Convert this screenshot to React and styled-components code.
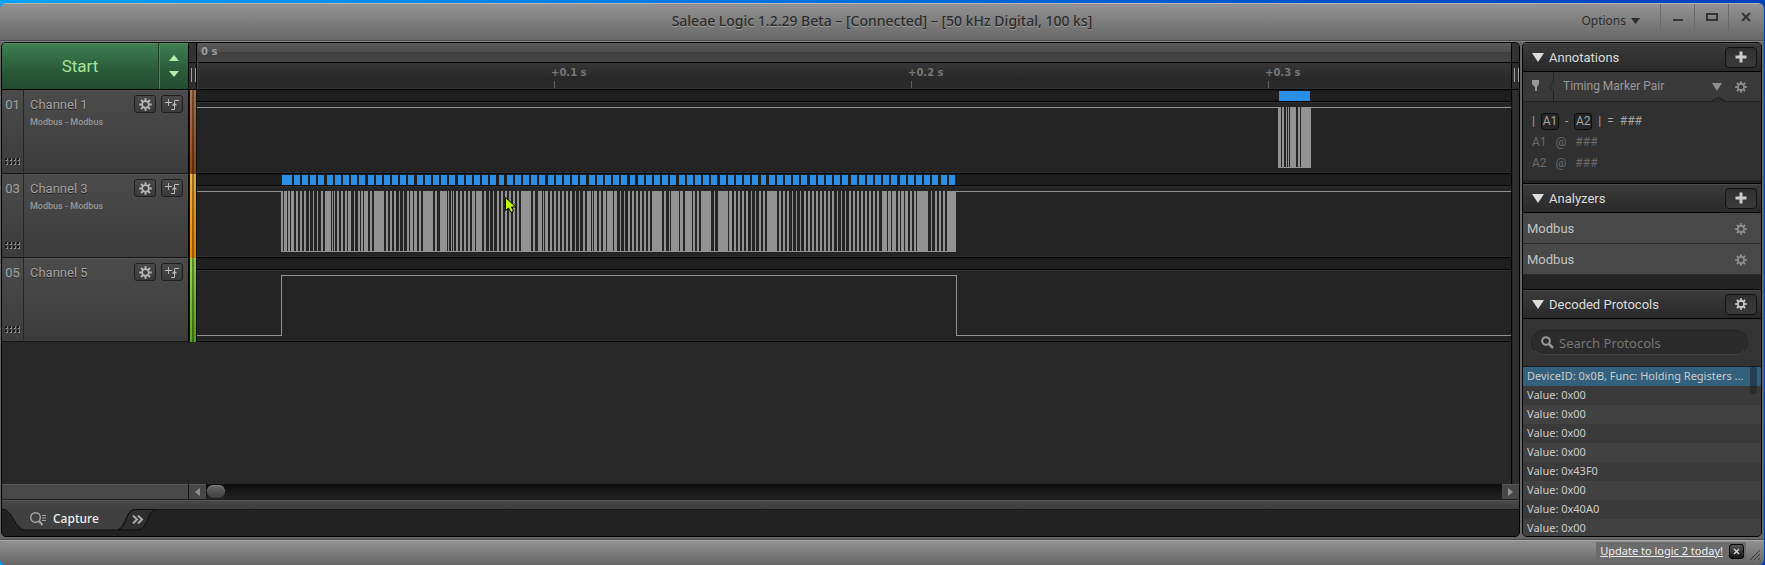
import React from "react";
import styled, { createGlobalStyle } from "styled-components";

const ui = `Roboto, "Noto Sans", sans-serif`;
const humanist = `"Noto Sans", "Open Sans", sans-serif`;
const wide = `"DejaVu Sans", "Noto Sans", sans-serif`;

const GlobalStyle = createGlobalStyle`
  * { box-sizing: border-box; }
  body { margin: 0; background: linear-gradient(90deg, #00a2ff, #0058d0 70%, #0040c0); }
  button { font: inherit; color: inherit; padding: 0; margin: 0; border: 0; background: none; cursor: pointer; }
  ul { list-style: none; margin: 0; padding: 0; }
  h1, h2, p { margin: 0; font-weight: 400; }
`;

const Window = styled.div`
  height: 100vh;
  min-width: 900px;
  padding: 3px 1px 0 0;
  display: flex;
  flex-direction: column;
  font: 13px/16px ${ui};
  color: #a0a0a0;
`;

const Frame = styled.div`
  flex: 1;
  min-height: 0;
  display: flex;
  flex-direction: column;
  border-radius: 6px;
  overflow: hidden;
  background: #666;
`;

/* ---------- title bar ---------- */

const TitleBar = styled.header`
  flex: none;
  height: 39px;
  display: grid;
  grid-template-columns: 1fr auto 1fr;
  color: #2c2c2c;
  border-top: 1px solid #b4b4b4;
  border-bottom: 1px solid #858585;
  box-shadow: inset 0 -1px 0 #4c4c4c;
  background: linear-gradient(#939393, #666);
`;

const Title = styled.h1`
  font: 500 14px/34px ${humanist};
  text-shadow: 0 1px 0 #9a9a9a;
`;

const TitleActions = styled.div`
  display: flex;
  justify-content: flex-end;
  align-items: flex-start;
  padding-right: 2px;
`;

const OptionsButton = styled.button`
  display: flex;
  align-items: center;
  gap: 5px;
  margin-right: 20px;
  height: 34px;
  font: 12px/34px ${humanist};
`;

const WindowButton = styled.button`
  width: 34px;
  height: 26px;
  display: grid;
  place-items: center;
  border-left: 1px solid #6a6a6a;
`;

/* ---------- body ---------- */

const Body = styled.main`
  flex: 1;
  min-height: 0;
  display: grid;
  grid-template-columns: minmax(0, 1fr) 240px;
  gap: 2px;
  padding: 0 2px 2px 1px;
`;

const Capture = styled.section`
  min-height: 0;
  display: flex;
  flex-direction: column;
  border: 1px solid #000;
  border-radius: 5px;
  overflow: hidden;
  background: #282828;
`;

const Upper = styled.div`
  flex: 1;
  min-height: 0;
  display: flex;
`;

const Tracks = styled.div`
  flex: 1;
  min-width: 0;
`;

const RightGutter = styled.div`
  width: 8px;
  border-left: 1px solid #000;
  background: linear-gradient(90deg, #262626, #303030 30%, #2a2a2a);
`;

const Grip = styled.div`
  height: 47px;
  border-bottom: 1px solid #000;
  padding: 25px 2px 0;
  background: linear-gradient(#333 19px, #000 19px, #000 20px, #2e2e2e 20px);
  &::before {
    content: "";
    display: block;
    width: 3px;
    height: 14px;
    border: solid #a2a2a2;
    border-width: 0 1px;
  }
`;

const TopRow = styled.div`
  display: flex;
  height: 47px;
`;

const StartGroup = styled.div`
  width: 187px;
  display: flex;
  border-right: 1px solid #000;
  border-bottom: 1px solid #000;
  background: linear-gradient(#3f8050, #37734a 20%, #2a5a38 60%, #244c31);
  box-shadow: inset 0 1px 0 #56956a;
`;

const StartButton = styled.button`
  flex: 1;
  font: 17px/46px ${ui};
  color: #a8e29a;
`;

const StartOptions = styled.button`
  width: 30px;
  display: grid;
  place-items: center;
  border-left: 1px solid #1d3d27;
  box-shadow: inset 1px 0 0 #4b8a5e;
`;

const RulerArea = styled.div`
  flex: 1;
  min-width: 0;
  border-bottom: 1px solid #000;
  border-left: 1px solid #444;
`;

const LeftGrip = styled.div`
  width: 8px;
  border-right: 1px solid #000;
`;

const RulerOrigin = styled.div`
  height: 20px;
  padding-left: 3px;
  border-bottom: 1px solid #000;
  background: linear-gradient(#5a5a5a, #4c4c4c 50%, #404040 50%, #444);
  font: 700 10px/18px ${wide};
  color: #9c9c9c;
`;

const RulerScale = styled.div`
  height: 26px;
  display: flex;
  overflow: hidden;
  padding-left: 353px;
  background: linear-gradient(#363636, #292929 60%, #2a2a2a);
  border-bottom: 1px solid #333;
`;

const RulerMark = styled.span`
  flex: none;
  width: 357px;
  font: 700 10px/16px ${wide};
  color: #777;
  padding-top: 2px;
  &::after {
    content: "";
    display: block;
    width: 1px;
    height: 8px;
    margin-left: 3px;
    background: #606060;
  }
`;

/* ---------- channels ---------- */

const Channel = styled.div`
  display: flex;
  height: 84px;
`;

const ChannelIndex = styled.div`
  width: 22px;
  display: flex;
  flex-direction: column;
  justify-content: space-between;
  align-items: center;
  padding: 7px 0 7px;
  border-right: 1px solid #262626;
  border-bottom: 1px solid #161616;
  background: linear-gradient(#4b4b4b, #3c3c3c);
`;

const ChannelHead = styled.div`
  width: 165px;
  display: grid;
  grid-template-columns: 1fr auto;
  align-content: start;
  padding: 5px 5px 0 6px;
  border-right: 1px solid #000;
  border-bottom: 1px solid #161616;
  box-shadow: inset 0 1px 0 #555;
  background: linear-gradient(#4b4b4b, #3c3c3c);
`;

const ChannelName = styled.h2`
  font: 13px/20px ${ui};
  color: #a2a2a2;
  text-shadow: 0 1px 0 #222;
`;

const ChannelButtons = styled.div`
  display: flex;
  gap: 5px;
`;

const SmallButton = styled.button`
  width: 22px;
  height: 18px;
  display: grid;
  place-items: center;
  color: #b8b8b8;
  border: 1px solid #1e1e1e;
  border-radius: 3px;
  background: linear-gradient(#484848, #3a3a3a);
`;

const AnalyzerNote = styled.p`
  grid-column: 1 / -1;
  font: 500 9px/14px ${ui};
  color: #989898;
`;

const ColorBand = styled.div`
  width: 8px;
  border: solid #111;
  border-width: 0 1px;
  background:
    linear-gradient(90deg, transparent 2px, rgba(0, 0, 0, 0.38) 2px, rgba(0, 0, 0, 0.38) 4px, rgba(0, 0, 0, 0.08) 4px),
    linear-gradient(${(p) => p.$from}, ${(p) => p.$to});
`;

const Lane = styled.div`
  flex: 1;
  min-width: 0;
  overflow: hidden;
  border-bottom: 1px solid #000;
  box-shadow: inset 0 -1px 0 #303030;
  background: linear-gradient(#1a1a1a 1px, #1f1f1f 2px, #1f1f1f 11px, #000 11px, #000 12px, #303030 12px, #303030 13px, #242424 13px);
  svg { display: block; }
`;

/* ---------- bottom of capture area ---------- */

const ScrollRow = styled.div`
  flex: none;
  height: 16px;
  display: flex;
  border-bottom: 1px solid #1c1c1c;
  background: #484848;
  box-shadow: inset 0 1px 0 #585858;
`;

const ScrollSpacer = styled.div`
  width: 187px;
  border-right: 1px solid #111;
`;

const ScrollArrow = styled.button`
  width: 17px;
  display: grid;
  place-items: center;
`;

const ScrollTrack = styled.div`
  flex: 1;
  padding: 1px;
  background: linear-gradient(#0c0c0c, #222);
`;

const ScrollThumb = styled.div`
  width: 18px;
  height: 13px;
  border-radius: 7px;
  background: linear-gradient(#686868, #3e3e3e);
  box-shadow: inset 0 1px 0 #808080;
`;

const TabBar = styled.nav`
  flex: none;
  height: 36px;
  display: flex;
  align-items: flex-start;
  padding-top: 9px;
  background: linear-gradient(#5a5a5a 1px, #464646 1px, #404040 9px, #141414 9px, #141414 10px, #222 10px);
`;

const Tab = styled.button`
  position: relative;
  width: ${(p) => p.$width}px;
  height: 22px;
  margin-right: -18px;
  font: 500 12px/18px ${humanist};
  color: #eee;
`;

const TabShape = styled.svg`
  position: absolute;
  inset: 0;
`;

const TabLabel = styled.span`
  position: relative;
  display: flex;
  align-items: center;
  gap: 6px;
  height: 20px;
  padding: 0 0 2px ${(p) => p.$pad}px;
`;

/* ---------- side panel ---------- */

const Side = styled.aside`
  min-height: 0;
  display: flex;
  flex-direction: column;
  border: 1px solid #000;
  border-radius: 5px;
  overflow: hidden;
  background: #232323;
`;

const PanelHeader = styled.div`
  flex: none;
  display: flex;
  align-items: center;
  height: ${(p) => (p.$first ? 29 : 30)}px;
  padding: 0 4px 0 9px;
  gap: 5px;
  border: solid #000;
  border-width: ${(p) => (p.$first ? "0 0 1px" : "1px 0")};
  box-shadow: inset 0 1px 0 #4a4a4a;
  background: linear-gradient(#3b3b3b, #292929);
`;

const PanelTitle = styled.h2`
  flex: 1;
  padding-top: 2px;
  font: 13px/26px ${ui};
  color: #dcdcdc;
`;

const PanelButton = styled(SmallButton)`
  width: 32px;
  height: 21px;
  color: #ccc;
  border-color: #111;
  border-radius: 4px;
  background: linear-gradient(#2f2f2f, #3a3a3a);
`;

const MarkerRow = styled.div`
  position: relative;
  flex: none;
  height: 30px;
  display: flex;
  align-items: center;
  gap: 13px;
  padding: 0 14px 0 8px;
  border-bottom: 1px solid #222;
  background: #393939;
`;

const MarkerName = styled.span`
  flex: 1;
  display: flex;
  gap: 9px;
  font: 12px/29px ${ui};
  color: #999;
`;

const Notch = styled.svg`
  position: absolute;
  right: 35px;
  bottom: -1px;
`;

const IconButton = styled.button`
  display: grid;
  place-items: center;
  color: #8f8f8f;
`;

const MarkerBody = styled.div`
  flex: none;
  height: 78px;
  padding: 9px 8px 0 9px;
  background: #303030;
`;

const MarkerLine = styled.div`
  display: flex;
  align-items: center;
  height: 21px;
  gap: ${(p) => (p.$first ? 6 : 9)}px;
  font: 12px/21px ${ui};
  color: ${(p) => (p.$first ? "#a4a4a4" : "#6a6a6a")};
`;

const MarkerChip = styled.span`
  width: 18px;
  height: 17px;
  font: 12px/15px ${ui};
  text-align: center;
  border-radius: 3px;
  border: 1px solid #0c0c0c;
  background: #262626;
`;

const Gap = styled.div`
  flex: none;
  height: ${(p) => p.$size}px;
`;

const AnalyzerRow = styled.li`
  height: 31px;
  display: flex;
  align-items: center;
  justify-content: space-between;
  padding: 2px 14px 0 4px;
  font: 13px/28px ${ui};
  color: #c4c4c4;
  background: #484848;
  border-bottom: 1px solid #2a2a2a;
`;

const SearchArea = styled.div`
  flex: none;
  height: 47px;
  padding: 11px 13px 0 8px;
  background: #333;
`;

const SearchBox = styled.label`
  display: flex;
  align-items: center;
  gap: 5px;
  height: 25px;
  padding: 0 9px;
  color: #999;
  border-radius: 13px;
  border: 1px solid #242424;
  border-bottom-color: #444;
  background: #2b2b2b;
`;

const SearchInput = styled.input`
  flex: 1;
  min-width: 0;
  padding: 0;
  border: 0;
  outline: 0;
  background: none;
  font: 13px/20px ${humanist};
  color: #ccc;
  &::placeholder { color: #777; opacity: 1; }
`;

const Results = styled.div`
  position: relative;
  flex: 1;
  min-height: 0;
  overflow: hidden;
  border-top: 1px solid #1a1a1a;
`;

const Result = styled.li`
  height: 19px;
  padding-left: 4px;
  font: 11px/18px ${humanist};
  white-space: nowrap;
  color: #ccc;
  background: ${(p) => (p.$selected ? "#33607c" : "#3a3a3a")};
  &:nth-child(odd) { background: ${(p) => (p.$selected ? "#33607c" : "#414141")}; }
`;

const ResultsThumb = styled.div`
  position: absolute;
  top: 0;
  right: 4px;
  width: 7px;
  height: 27px;
  border-radius: 3px;
  background: rgba(20, 30, 36, 0.5);
`;

/* ---------- status bar ---------- */

const StatusBar = styled.footer`
  flex: none;
  height: 26px;
  display: flex;
  justify-content: flex-end;
  align-items: flex-start;
  padding: 2px 4px 0 0;
  border-top: 1px solid #4c4c4c;
  box-shadow: inset 0 1px 0 #aaa;
  background: linear-gradient(#939393, #666);
`;

const Notice = styled.div`
  display: flex;
  align-items: center;
  gap: 6px;
  height: 18px;
  margin-right: 3px;
  padding: 0 2px 0 4px;
  background: #6b6b6b;
`;

const NoticeLink = styled.a`
  font: 11px/18px ${humanist};
  color: #eee;
`;

const DismissButton = styled.button`
  width: 15px;
  height: 15px;
  display: grid;
  place-items: center;
  color: #ddd;
  border: 1px solid #000;
  border-radius: 3px;
  background: linear-gradient(#555, #151515);
`;

const Pointer = styled.svg`
  position: absolute;
  left: 504px;
  top: 196px;
  pointer-events: none;
`;

/* ---------- icons ---------- */

const Gear = ({ size = 12 }) => (
  <svg width={size} height={size} viewBox="-6 -6 12 12" fill="none" stroke="currentColor" aria-hidden="true">
    <circle r="3.1" strokeWidth="1.6" />
    {[0, 45, 90, 135, 180, 225, 270, 315].map((a) => (
      <path key={a} d="M0-3.4V-5.8" strokeWidth="1.8" transform={`rotate(${a})`} />
    ))}
  </svg>
);

const Triangle = ({ w, h, fill = "currentColor" }) => (
  <svg width={w} height={h} aria-hidden="true">
    <path d={`M0 0H${w}L${w / 2} ${h}z`} fill={fill} />
  </svg>
);

const TriggerIcon = () => (
  <svg width="15" height="13" fill="none" stroke="currentColor" aria-hidden="true">
    <path d="M0 4.5H7M3.5 1V8M6 11.5H9.5V2.5H14" />
    <path d="M6.8 7.5L9.5 4.5L12.2 7.5z" fill="currentColor" stroke="none" />
  </svg>
);

const Plus = () => (
  <svg width="12" height="12" aria-hidden="true">
    <path d="M6 .5V11.5M.5 6H11.5" stroke="currentColor" strokeWidth="3" />
  </svg>
);

const DragDots = () => (
  <svg width="15" height="8" aria-hidden="true">
    {[0, 4, 8, 12].flatMap((x) =>
      [0, 4].map((y) => (
        <g key={`${x}-${y}`}>
          <rect x={x} y={y} width="2" height="2" fill="#161616" />
          <rect x={x + 1} y={y + 2} width="2" height="1" fill="#909090" />
          <rect x={x + 2} y={y} width="1" height="2" fill="#808080" />
        </g>
      ))
    )}
  </svg>
);

/* ---------- captured data, in pixels from the start of the time line ---------- */

const BURST_START = 84;
const BURST_END = 759;

// "from-to" spans; the A lists count from x = 73 and the B lists from x = 423
const GAPS_A =
  "13-14 17-18 20-21 24-26 28-30 32-34 36-39 40-43 44-47 48-51 53-55 61-62 63-64 65-67 69-71 73-75 77-78 81-84 85-88 90-91 93-94 98-100 102-104 114-116 118-120 122-124 126-129 130-133 134-137 139-140 143-144 147-149 151-153 163-165 167-170 177-178 179-181 182-183 184-186 188-190 192-194 196-198 200-202 205-206 212-214 216-219 220-223 224-227 229-231 233-235 237-239 241-243 245-247 249-251 261-263 265-268 272-273 274-275 278-280 282-284 286-288 290-292 294-296 298-300 302-305 306-309 310-313 315-317 321-322 323-324 327-329 331-333 336-337 343-344 347-350";
const GAPS_B =
  "1-4 5-8 10-12 14-16 18-20 22-24 26-28 30-32 42-44 46-49 50-51 59-60 63-65 72-73 75-77 79-81 91-94 95-98 108-109 112-114 116-118 120-122 124-126 128-131 132-135 136-139 141-143 145-147 157-159 161-163 165-167 169-172 173-176 177-180 181-184 186-188 190-192 194-196 198-200 202-204 206-208 210-212 214-217 218-221 222-225 226-229 231-233 235-237 239-241 243-245 247-249 251-253 255-257 259-262 267-268 271-272 276-278 280-281 284-285 288-290 292-294 296-297 308-311 312-315 317-319 321-323 325-327";
const FRAMES_A =
  "12-22 24-30 32-38 40-46 48-54 57-63 65-71 73-79 81-87 89-95 98-104 106-112 114-120 122-128 130-136 138-144 147-153 155-161 163-169 171-177 179-185 188-194 196-202 204-210 212-218 220-226 229-234 237-243 245-251 253-259 261-267 269-275 278-284 286-292 294-300 302-308 310-316 319-325 327-333 335-341 343-349";
const FRAMES_B =
  "1-7 10-15 18-24 26-32 34-40 42-48 50-56 59-65 67-73 75-81 83-89 91-97 100-106 108-114 116-122 124-130 132-138 141-146 149-155 157-163 165-171 173-179 181-187 190-196 198-204 206-212 214-220 222-228 231-237 239-245 247-253 255-261 263-269 271-277 280-286 288-294 296-302 304-310 312-318 321-327 329-335";

const spans = (text, base) =>
  text.split(" ").map((s) => {
    const [a, b] = s.split("-").map(Number);
    return [base + a, b - a];
  });

const HIGH = 17;
const LOW = 77;

const Burst = ({ start, end, gaps, frames }) => (
  <svg width="100%" height="83" shapeRendering="crispEdges">
    <rect y={HIGH} width="100%" height="1" fill="#929292" />
    <rect x={start} y={HIGH} width={end - start} height={LOW - HIGH + 1} fill="#929292" />
    {gaps.map(([x, w]) => (
      <rect key={x} x={x} y={HIGH} width={w} height={LOW - HIGH} fill="#242424" />
    ))}
    {frames.map(([x, w]) => (
      <rect key={x} x={x} y="1" width={w} height="10" fill="#2a8fe4" />
    ))}
  </svg>
);

const Pulse = () => (
  <svg width="100%" height="83" fill="#929292" shapeRendering="crispEdges">
    <rect y={LOW} width={BURST_START + 1} height="1" />
    <rect x={BURST_START} y={HIGH} width="1" height={LOW - HIGH} />
    <rect x={BURST_START} y={HIGH} width={BURST_END - BURST_START} height="1" />
    <rect x={BURST_END} y={HIGH} width="1" height={LOW - HIGH} />
    <rect x={BURST_END} y={LOW} width="100%" height="1" />
  </svg>
);

const channels = [
  {
    id: "01", name: "Channel 1", note: "Modbus - Modbus", from: "#b07850", to: "#8f4816",
    wave: <Burst start={1081} end={1114} gaps={[[1084, 1], [1087, 2], [1090, 1], [1092, 1], [1099, 2], [1103, 1]]} frames={[[1082, 31]]} />,
  },
  {
    id: "03", name: "Channel 3", note: "Modbus - Modbus", from: "#efb445", to: "#ef8a00",
    wave: (
      <Burst
        start={BURST_START}
        end={BURST_END}
        gaps={[...spans(GAPS_A, 73), ...spans(GAPS_B, 423)]}
        frames={[...spans(FRAMES_A, 73), ...spans(FRAMES_B, 423)]}
      />
    ),
  },
  { id: "05", name: "Channel 5", from: "#98d850", to: "#5aa822", wave: <Pulse /> },
];

const results = ["0x00", "0x00", "0x00", "0x00", "0x43F0", "0x00", "0x40A0", "0x00"];

export default function App() {
  return (
    <Window>
      <GlobalStyle />
      <Frame>
        <TitleBar>
          <span />
          <Title>Saleae Logic 1.2.29 Beta – [Connected] – [50 kHz Digital, 100 ks]</Title>
          <TitleActions>
            <OptionsButton>Options <Triangle w={9} h={6} /></OptionsButton>
            <WindowButton aria-label="Minimize">
              <svg width="12" height="12"><rect x="1" y="8" width="10" height="2" fill="#333" /></svg>
            </WindowButton>
            <WindowButton aria-label="Maximize">
              <svg width="12" height="10"><rect x="1" y="2" width="10" height="6" fill="none" stroke="#333" strokeWidth="2" /></svg>
            </WindowButton>
            <WindowButton aria-label="Close">
              <svg width="10" height="10"><path d="M1 1L9 9M9 1L1 9" stroke="#333" strokeWidth="2" /></svg>
            </WindowButton>
          </TitleActions>
        </TitleBar>

        <Body>
          <Capture>
            <Upper>
              <Tracks>
                <TopRow>
                  <StartGroup>
                    <StartButton>Start</StartButton>
                    <StartOptions aria-label="Capture settings">
                      <svg width="10" height="22" fill="#b4ecac"><path d="M0 6L5 0L10 6zM0 16H10L5 22z" /></svg>
                    </StartOptions>
                  </StartGroup>
                  <LeftGrip><Grip /></LeftGrip>
                  <RulerArea>
                    <RulerOrigin>0 s</RulerOrigin>
                    <RulerScale>
                      <RulerMark>+0.1 s</RulerMark>
                      <RulerMark>+0.2 s</RulerMark>
                      <RulerMark>+0.3 s</RulerMark>
                    </RulerScale>
                  </RulerArea>
                </TopRow>
                {channels.map((c) => (
                  <Channel key={c.id}>
                    <ChannelIndex>{c.id}<DragDots /></ChannelIndex>
                    <ChannelHead>
                      <ChannelName>{c.name}</ChannelName>
                      <ChannelButtons>
                        <SmallButton aria-label={`${c.name} settings`}><Gear size={13} /></SmallButton>
                        <SmallButton aria-label={`${c.name} trigger`}><TriggerIcon /></SmallButton>
                      </ChannelButtons>
                      {c.note && <AnalyzerNote>{c.note}</AnalyzerNote>}
                    </ChannelHead>
                    <ColorBand $from={c.from} $to={c.to} />
                    <Lane>{c.wave}</Lane>
                  </Channel>
                ))}
              </Tracks>
              <RightGutter><Grip /></RightGutter>
            </Upper>

            <ScrollRow>
              <ScrollSpacer />
              <ScrollArrow aria-label="Scroll left">
                <svg width="5" height="8"><path d="M5 0V8L0 4z" fill="#929292" /></svg>
              </ScrollArrow>
              <ScrollTrack><ScrollThumb /></ScrollTrack>
              <ScrollArrow aria-label="Scroll right">
                <svg width="5" height="8"><path d="M0 0V8L5 4z" fill="#929292" /></svg>
              </ScrollArrow>
            </ScrollRow>

            <TabBar>
              <Tab $width={133}>
                <TabShape width="133" height="22" aria-hidden="true">
                  <path d="M0 0C12 1 12 21 24 21H112C124 21 122 1 133 0z" fill="#404040" />
                  <path d="M0 0C12 1 12 21 24 21H114" fill="none" stroke="#0e0e0e" />
                </TabShape>
                <TabLabel $pad={28}>
                  <svg width="17" height="14" fill="none" stroke="#a4a4a4" aria-hidden="true">
                    <circle cx="5.5" cy="5.5" r="4.8" strokeWidth="1.4" />
                    <path d="M9 9L12.5 13" strokeWidth="2" />
                    <path d="M12 3.5H16M12 6H16M12 8.5H16" />
                  </svg>
                  Capture
                </TabLabel>
              </Tab>
              <Tab $width={40} aria-label="More tabs">
                <TabShape width="40" height="22" aria-hidden="true">
                  <path d="M0 21C10 21 8 .5 18 .5H39C30 .5 32 21 20 21z" fill="#2e2e2e" stroke="#0c0c0c" />
                </TabShape>
                <TabLabel $pad={15}>
                  <svg width="12" height="9" fill="none" stroke="#aaa" strokeWidth="2" aria-hidden="true">
                    <path d="M1 .5L5 4.5L1 8.5M6 .5L10 4.5L6 8.5" />
                  </svg>
                </TabLabel>
              </Tab>
            </TabBar>
          </Capture>

          <Side>
            <PanelHeader $first>
              <Triangle w={12} h={9} fill="#ddd" />
              <PanelTitle>Annotations</PanelTitle>
              <PanelButton aria-label="Add annotation"><Plus /></PanelButton>
            </PanelHeader>
            <MarkerRow>
              <MarkerName>
                <svg width="23" height="29" fill="none" aria-hidden="true">
                  <path d="M1 8H8V12L6 15V19H4V15L1 12z" fill="#999" />
                  <path d="M22.5 0V10L18.5 14.5L22.5 19V29" stroke="#222" />
                </svg>
                Timing Marker Pair
              </MarkerName>
              <IconButton aria-label="Toggle marker pair"><Triangle w={10} h={8} /></IconButton>
              <IconButton aria-label="Marker pair settings"><Gear /></IconButton>
              <Notch width="15" height="5" aria-hidden="true">
                <path d="M0 4.5L7.5 .5L15 4.5" fill="#303030" stroke="#1c1c1c" />
              </Notch>
            </MarkerRow>
            <MarkerBody>
              <MarkerLine $first>
                <span>|</span><MarkerChip>A1</MarkerChip><span>-</span><MarkerChip>A2</MarkerChip><span>|</span><span>=</span><span>###</span>
              </MarkerLine>
              <MarkerLine><span>A1</span><span>@</span><span>###</span></MarkerLine>
              <MarkerLine><span>A2</span><span>@</span><span>###</span></MarkerLine>
            </MarkerBody>
            <Gap $size={3} />

            <PanelHeader>
              <Triangle w={12} h={9} fill="#ddd" />
              <PanelTitle>Analyzers</PanelTitle>
              <PanelButton aria-label="Add analyzer"><Plus /></PanelButton>
            </PanelHeader>
            <ul>
              {[1, 2].map((n) => (
                <AnalyzerRow key={n}>
                  Modbus
                  <IconButton aria-label={`Modbus analyzer ${n} settings`}><Gear /></IconButton>
                </AnalyzerRow>
              ))}
            </ul>
            <Gap $size={14} />

            <PanelHeader>
              <Triangle w={12} h={9} fill="#ddd" />
              <PanelTitle>Decoded Protocols</PanelTitle>
              <PanelButton aria-label="Protocol settings"><Gear /></PanelButton>
            </PanelHeader>
            <SearchArea>
              <SearchBox>
                <svg width="13" height="13" fill="none" stroke="currentColor" aria-hidden="true">
                  <circle cx="5" cy="5" r="3.8" strokeWidth="2" />
                  <path d="M8 8L12 12" strokeWidth="2.5" />
                </svg>
                <SearchInput aria-label="Search Protocols" placeholder="Search Protocols" />
              </SearchBox>
            </SearchArea>
            <Results>
              <ul>
                <Result $selected>DeviceID: 0x0B, Func: Holding Registers ...</Result>
                {results.map((v, i) => (
                  <Result key={i}>Value: {v}</Result>
                ))}
              </ul>
              <ResultsThumb />
            </Results>
          </Side>
        </Body>

        <StatusBar>
          <Notice>
            <NoticeLink href="#update">Update to logic 2 today!</NoticeLink>
            <DismissButton aria-label="Dismiss">
              <svg width="7" height="7"><path d="M1 1L6 6M6 1L1 6" stroke="currentColor" strokeWidth="1.2" /></svg>
            </DismissButton>
          </Notice>
          <svg width="11" height="20" aria-hidden="true">
            <path d="M1 18L11 8M5 18L11 12M9 18L11 16" stroke="#333" />
          </svg>
        </StatusBar>
      </Frame>
      <Pointer width="14" height="18" aria-hidden="true">
        <path d="M1.5 1.5V14.5L4.5 12L7 16.5L9.5 15L7.5 11H12z" fill="#bdfb00" stroke="#000" />
      </Pointer>
    </Window>
  );
}
